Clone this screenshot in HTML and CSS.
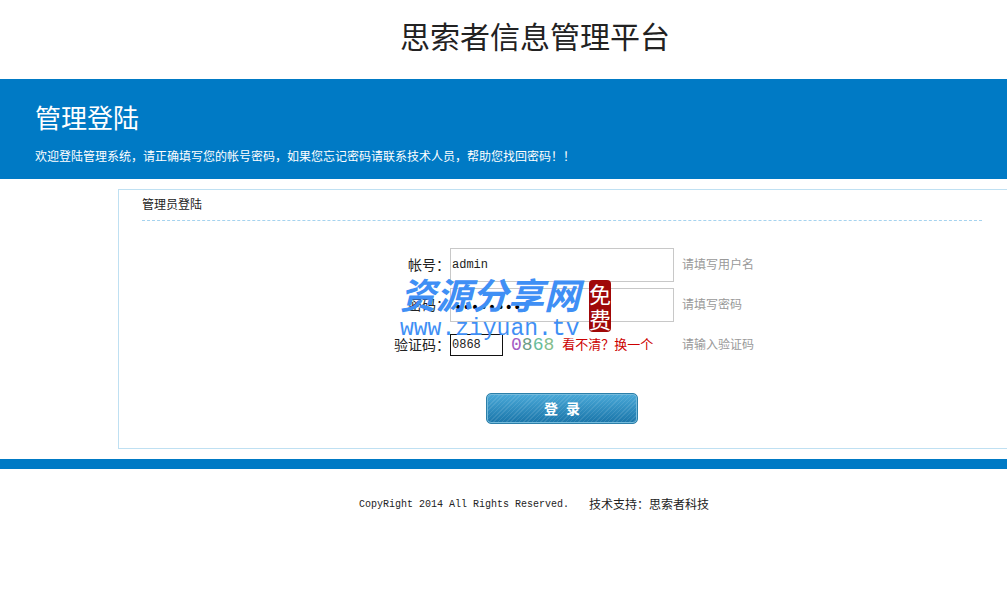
FILE: index.html
```html
<!DOCTYPE html>
<html lang="zh-CN">
<head>
<meta charset="utf-8">
<title>思索者信息管理平台</title>
<link rel="stylesheet" href="styles.css">
</head>
<body>
<header class="site-title">思索者信息管理平台</header>
<section class="banner">
  <h1>管理登陆</h1>
  <p>欢迎登陆管理系统，请正确填写您的帐号密码，如果您忘记密码请联系技术人员，帮助您找回密码！！</p>
</section>
<main class="panel">
  <h2>管理员登陆</h2>
  <form class="login">
    <div class="row">
      <label for="user">帐号：</label>
      <input class="field" id="user" type="text" value="admin">
      <span class="hint">请填写用户名</span>
    </div>
    <div class="row">
      <label for="pass">密码：</label>
      <input class="field" id="pass" type="password" value="admin888">
      <span class="hint">请填写密码</span>
    </div>
    <div class="row">
      <label for="code">验证码：</label>
      <div class="verify">
        <input class="code" id="code" type="text" value="0868">
        <span class="captcha"><i class="c1">0</i><i class="c2">8</i><i class="c3">6</i><i class="c4">8</i></span>
        <a href="#">看不清？换一个</a>
      </div>
      <span class="hint">请输入验证码</span>
    </div>
    <button class="submit" type="submit">登&nbsp; 录</button>
    <div class="mark">
      <div class="mark-text">
        <div class="mark-name">资源分享网</div>
        <div class="mark-url">www.ziyuan.tv</div>
      </div>
      <div class="seal"><span>免</span><span>费</span></div>
    </div>
  </form>
</main>
<footer class="footer">
  <span class="copy">CopyRight 2014 All Rights Reserved.</span>
  <span>技术支持：思索者科技</span>
</footer>
</body>
</html>
```
FILE: styles.css
```css
* { box-sizing: border-box; }
body {
  margin: 0;
  background: #fff;
  color: #222;
  font: 12px/18px "Liberation Sans", "Noto Sans CJK SC", sans-serif;
}
.site-title {
  padding: 16px 0 19px 63px;
  text-align: center;
  font-size: 30px;
  line-height: 44px;
}
.banner {
  padding: 21px 35px 13px;
  background: #007ac5;
  color: #fff;
}
.banner h1 {
  margin: 0 0 10px;
  font-size: 26px;
  line-height: 38px;
  font-weight: 400;
}
.banner p { margin: 0; }
.panel {
  margin: 10px 0 10px 118px;
  padding: 0 25px 24px 23px;
  border: 1px solid #bfe0f2;
  border-right: 0;
}
.panel h2 {
  margin: 0;
  padding: 6px 0;
  border-bottom: 1px dashed #a5d3ef;
  font-size: 12px;
  line-height: 18px;
  font-weight: 400;
}
.login {
  position: relative;
  display: flex;
  flex-direction: column;
  gap: 6px;
  padding-top: 27px;
}
.row {
  display: grid;
  grid-template-columns: 1fr 224px 1fr;
  align-items: center;
  min-height: 34px;
}
.row label {
  text-align: right;
  font-size: 14px;
}
.field, .code {
  margin: 0;
  padding: 0 1px;
  background: #fff;
  color: #222;
  border: 1px solid #c8c8c8;
  border-radius: 0;
  font: 12px "Liberation Mono", monospace;
}
.field {
  width: 100%;
  height: 34px;
}
.field[type="password"] {
  padding-left: 3px;
  padding-top: 3px;
  color: #000;
  font: 14px "DejaVu Sans Mono", monospace;
}
.verify {
  display: flex;
  align-items: center;
}
.code {
  width: 53px;
  height: 22px;
  border-color: #111;
}
.captcha {
  margin: 0 8px;
  font: 18px/22px "Liberation Mono", monospace;
}
.captcha i { font-style: normal; }
.c1 { color: #a45cc4; }
.c2 { color: #6a9c86; }
.c3 { color: #66bd9c; }
.c4 { color: #84bd8c; }
.verify a {
  color: #c00;
  font-size: 13px;
  text-decoration: none;
  white-space: nowrap;
}
.hint {
  padding-left: 8px;
  color: #999;
}
.submit {
  align-self: center;
  width: 152px;
  height: 31px;
  margin-top: 25px;
  padding: 0;
  border: 1px solid #2c7fa9;
  border-radius: 5px;
  background:
    repeating-linear-gradient(135deg, rgba(255,255,255,.1) 0 1px, transparent 1px 3px),
    linear-gradient(#4aa9d8, #1a75a9);
  box-shadow: inset 0 0 0 1px #75bbdc;
  color: #fff;
  font: bold 14px/20px "Liberation Sans", "Noto Sans CJK SC", sans-serif;
}
.mark {
  position: absolute;
  top: 50px;
  left: calc(50% - 162px);
  display: flex;
  gap: 9px;
  pointer-events: none;
}
.mark-text { color: #3f8ff5; }
.mark-name {
  font: italic bold 36px/44px "Noto Sans CJK SC", sans-serif;
}
.mark-url {
  font: 23px/28px "Liberation Mono", monospace;
}
.seal {
  display: flex;
  flex-direction: column;
  align-self: flex-start;
  width: 22px;
  margin-top: 9px;
  padding: 1px 0;
  border-radius: 4px;
  background: #a00808;
  color: #fff;
  font: 22px/25px "Noto Sans CJK SC", sans-serif;
}
.footer {
  display: flex;
  justify-content: center;
  align-items: center;
  gap: 20px;
  padding: 27px 0 26px 61px;
  border-top: 10px solid #007ac5;
}
.copy { font: 10px/18px "Liberation Mono", monospace; }
```
